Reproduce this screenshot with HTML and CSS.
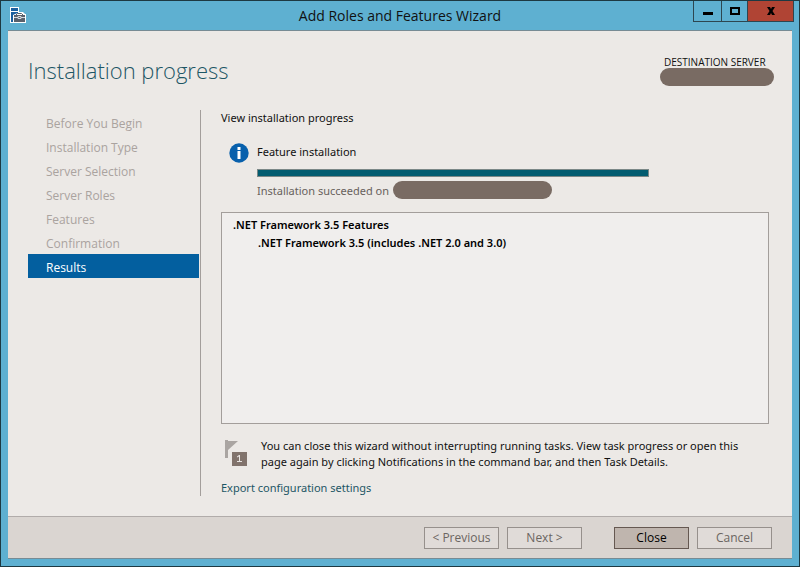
FILE: index.html
```html
<!DOCTYPE html>
<html lang="en">
<head>
<meta charset="utf-8">
<title>Add Roles and Features Wizard</title>
<link rel="stylesheet" href="styles.css">
</head>
<body>
<div class="window">
  <header class="titlebar">
    <svg class="app-icon" width="17" height="17" viewBox="0 0 17 17" aria-hidden="true">
      <path d="M0 0h9v5h4l2 2h1v9H0z" fill="#fff"/>
      <path d="M1 1h7v3H1zM1 5h7v1L5 7 3 8v7H1z" fill="#1a5f9e"/>
      <path d="M4 8h11v7H4z" fill="#59616c"/>
      <path d="M6 8 7.500 6.500h4L13 8" fill="none" stroke="#59616c"/>
      <path d="M4 10.500h4M11 10.500h4M8 9.500h3v2H8z" fill="none" stroke="#d5dade"/>
    </svg>
    <h1 class="window-title">Add Roles and Features Wizard</h1>
    <div class="window-buttons">
      <button class="win-btn minimize" type="button" aria-label="Minimize"><svg width="10" height="10" viewBox="0 0 10 10"><path d="M0 6h10v3H0z"/></svg></button>
      <button class="win-btn maximize" type="button" aria-label="Maximize"><svg width="10" height="10" viewBox="0 0 10 10"><path fill-rule="evenodd" d="M0 1h10v8H0zM2 3v4h6V3z"/></svg></button>
      <button class="win-btn close" type="button" aria-label="Close window"><svg width="10" height="10" viewBox="0 0 10 10"><path d="M1 1h3l1 2 1-2h3L6.500 5 9 9H6L5 7 4 9H1l2.500-4z"/></svg></button>
    </div>
  </header>
  <div class="client">
    <div class="heading">
      <h2 class="page-title">Installation progress</h2>
      <div class="destination">
        <span class="destination-label">DESTINATION SERVER</span>
        <span class="redacted server-name"></span>
      </div>
    </div>
    <div class="columns">
      <nav class="steps">
        <ul>
          <li>Before You Begin</li>
          <li>Installation Type</li>
          <li>Server Selection</li>
          <li>Server Roles</li>
          <li>Features</li>
          <li>Confirmation</li>
          <li class="current" aria-current="step">Results</li>
        </ul>
      </nav>
      <main class="content">
        <p class="lead">View installation progress</p>
        <section class="status">
          <svg class="info-icon" width="20" height="20" viewBox="0 0 20 20" aria-hidden="true">
            <circle cx="10" cy="10" r="9.700" fill="#0860ac"/>
            <path d="M8.500 4h3v3h-3zM8.500 8h3v8h-3z" fill="#fff"/>
          </svg>
          <div class="status-body">
            <span id="task">Feature installation</span>
            <div class="progress" role="progressbar" aria-labelledby="task" aria-valuenow="100"></div>
            <div class="result"><span>Installation succeeded on</span><span class="redacted host-name"></span></div>
          </div>
        </section>
        <ul class="features">
          <li>.NET Framework 3.5 Features
            <ul><li>.NET Framework 3.5 (includes .NET 2.0 and 3.0)</li></ul>
          </li>
        </ul>
        <div class="note">
          <svg class="flag-icon" width="22" height="26" viewBox="0 0 22 26" aria-hidden="true">
            <path d="M0 0h3v18H0z" fill="#aaa5a2"/>
            <path d="M3 1h10L3 10z" fill="#aaa5a2"/>
            <path d="M7 12h15v14H7z" fill="#81736c"/>
            <path d="M12 16.500 14 15h1v6h2v1h-5v-1h2v-4.500l-2 1z" fill="#e8e4e1"/>
          </svg>
          <p>You can close this wizard without interrupting running tasks. View task progress or open this page again by clicking Notifications in the command bar, and then Task Details.</p>
        </div>
        <a class="export" href="#">Export configuration settings</a>
      </main>
    </div>
    <footer class="actions">
      <div class="pair">
        <button class="btn" type="button">&lt; Previous</button>
        <button class="btn" type="button">Next &gt;</button>
      </div>
      <div class="pair">
        <button class="btn primary" type="button">Close</button>
        <button class="btn" type="button">Cancel</button>
      </div>
    </footer>
  </div>
</div>
</body>
</html>
```
FILE: styles.css
```css
* {
  box-sizing: border-box;
}

body {
  margin: 0;
  font: 12px/16px "Open Sans", "Noto Sans", sans-serif;
  color: #111;
}

h1, h2, p, ul {
  margin: 0;
  padding: 0;
  font-weight: 400;
  list-style: none;
}

.window {
  display: flex;
  flex-direction: column;
  min-height: 100vh;
  padding: 0 7px 7px;
  border: 1px solid #1d3942;
  background: #5eb0d1;
}

.titlebar {
  display: grid;
  grid-template-columns: 1fr auto 1fr;
  height: 29px;
}

.app-icon {
  margin: 6px 0 0 2px;
}

.window-title {
  font-size: 14px;
  line-height: 29px;
}

.window-buttons {
  display: flex;
  justify-self: end;
  height: 21px;
  margin-right: -2px;
  border: 1px solid #2d4650;
  border-top: 0;
}

.win-btn {
  display: flex;
  align-items: center;
  justify-content: center;
  width: 27px;
  padding: 0;
  border: 0;
  background: #5eb0d1;
}

.maximize {
  border: solid #2d4650;
  border-width: 0 1px;
}

.close {
  width: 45px;
  background: #b04434;
}

.client {
  display: flex;
  flex: 1;
  flex-direction: column;
  border: solid #778b94;
  border-width: 1px 0;
  background: #ece9e6;
}

.heading {
  display: flex;
  align-items: start;
  justify-content: space-between;
  height: 79px;
  padding: 23px 18px 0 20px;
}

.page-title {
  font-size: 22px;
  font-weight: 300;
  line-height: 32px;
  color: #1d5665;
}

.destination {
  display: flex;
  flex-direction: column;
  width: 114px;
}

.destination-label {
  padding-left: 4px;
  font-size: 10px;
  white-space: nowrap;
}

.redacted {
  height: 18px;
  border-radius: 10px;
  background: #796b63;
}

.server-name {
  margin-top: -2px;
}

.columns {
  display: flex;
  flex: 1;
  padding: 0 23px 20px 20px;
}

.steps {
  width: 173px;
  padding-right: 1px;
  border-right: 1px solid #a39e9b;
}

.steps li {
  height: 24px;
  padding-left: 18px;
  line-height: 28px;
  color: #aaa39f;
}

.steps .current {
  background: #035f9f;
  color: #fff;
}

.content {
  display: flex;
  flex: 1;
  flex-direction: column;
  padding-left: 20px;
  font-family: "Noto Sans", "Open Sans", sans-serif;
  font-size: 11px;
}

.status {
  display: flex;
  gap: 8px;
  margin-top: 18px;
  padding-left: 8px;
}

.info-icon {
  flex: none;
  margin-top: -1px;
}

.status-body {
  flex: 1;
}

.progress {
  height: 8px;
  margin: 9px 120px 4px 0;
  border: 1px solid #7b8887;
  background: #025c70;
}

.result {
  display: flex;
  height: 18px;
  gap: 4px;
  line-height: 20px;
  color: #68615c;
}

.host-name {
  width: 159px;
}

.features {
  flex: 1;
  margin-top: 13px;
  padding: 3px 11px;
  border: 1px solid #a39e9b;
  background: #f0eeed;
  color: #000;
  line-height: 18px;
}

.features li {
  font-weight: 600;
}

.features ul {
  padding-left: 25px;
}

.note {
  display: flex;
  gap: 14px;
  margin-top: 14px;
  padding: 0 10px 0 4px;
}

.flag-icon {
  flex: none;
  margin-top: 2px;
}

.export {
  align-self: start;
  margin-top: 10px;
  color: #1d5665;
  text-decoration: none;
}

.actions {
  display: flex;
  justify-content: end;
  gap: 32px;
  height: 42px;
  padding: 10px 20px 0;
  border-top: 1px solid #b1acaa;
  background: #dad5d1;
}

.pair {
  display: flex;
  gap: 8px;
}

.btn {
  width: 75px;
  height: 22px;
  padding: 0;
  border: 1px solid #96908c;
  background: #e0dbd8;
  font: inherit;
  color: #6b6561;
}

.primary {
  border-color: #655851;
  background: #bfb5ae;
  color: #000;
}
```
